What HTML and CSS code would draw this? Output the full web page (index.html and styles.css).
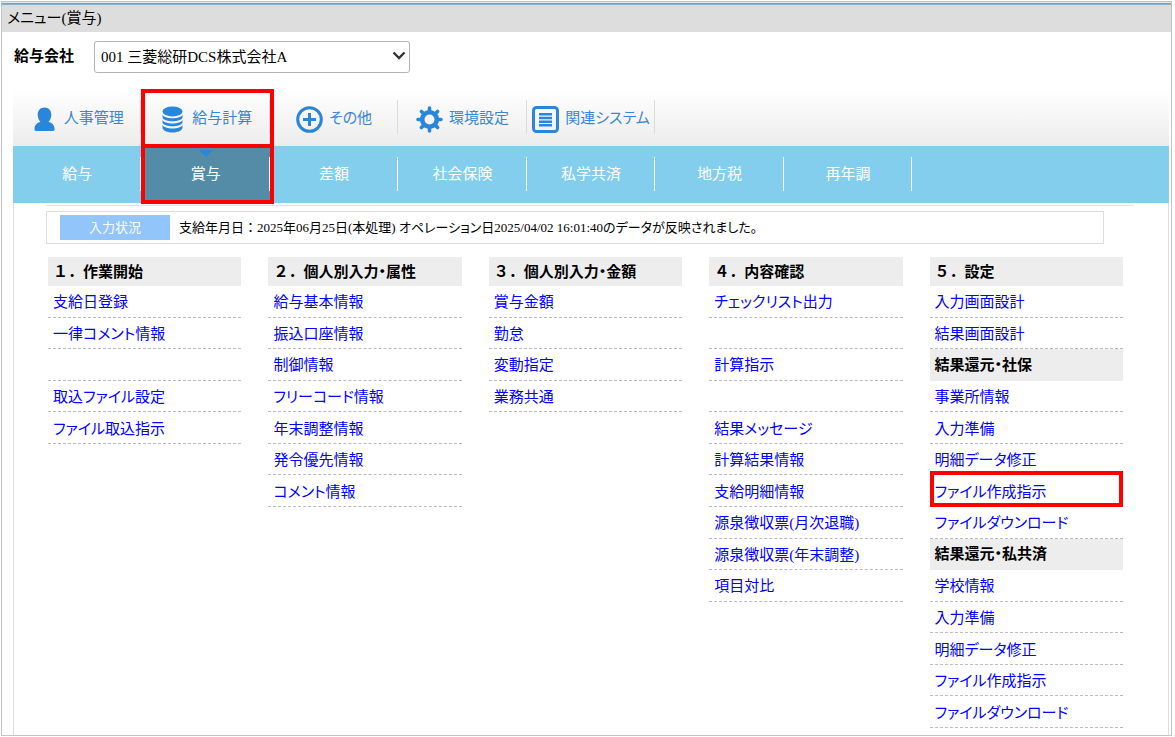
FILE: index.html
```html
<!DOCTYPE html>
<html lang="ja">
<head>
    <meta charset="UTF-8">
    <meta name="viewport" content="width=device-width, initial-scale=1.0">
    <title>メニュー(賞与)</title>
    <link rel="stylesheet" href="styles.css">
</head>
<body>
    <div class="window">
        <div class="window-edge"></div>
        <h1 class="title">メニュー(賞与)</h1>

        <div class="company">
            <label for="company">給与会社</label>
            <div class="select-box">
                <select id="company">
                    <option>001 三菱総研DCS株式会社A</option>
                </select>
                <svg class="arrow" viewBox="0 0 14 10"><path d="M1.5 1.500 L7 7 L12.5 1.500" fill="none" stroke="#333" stroke-width="2.4"/></svg>
            </div>
        </div>

        <div class="panel">
            <nav class="main-nav">
                <a href="#">
                    <svg class="icon" viewBox="0 0 27 27"><path d="M13.500 1.500c4 0 6.800 2.800 6.800 7 0 3.500-1.300 6-2.800 7.400 3.600.8 6 3 6 6.600v1c0 .8-.6 1.400-1.400 1.400H4.900c-.8 0-1.400-.6-1.400-1.400v-1c0-3.600 2.400-5.800 6-6.600C8 14.500 6.700 12 6.700 8.500c0-4.200 2.800-7 6.800-7z"/></svg>
                    <span>人事管理</span>
                </a>
                <a href="#">
                    <svg class="icon" viewBox="0 0 27 27"><ellipse cx="13.500" cy="5.500" rx="10" ry="5"/><path d="M3.500 8.500c1.500 5 18.500 5 20 0v3c-1.500 5-18.500 5-20 0zM3.500 13.700c1.500 5 18.500 5 20 0v2.800c-1.500 5-18.500 5-20 0zM3.500 18.700c1.500 5 18.500 5 20 0v3.300c-1.500 6-18.500 6-20 0z"/></svg>
                    <span>給与計算</span>
                    <i class="mark mark-main"></i>
                </a>
                <a href="#">
                    <svg class="icon" viewBox="0 0 27 27"><circle cx="13.500" cy="13.500" r="11.800" fill="none" stroke="#2a86db" stroke-width="3"/><path d="M12 7h3v5h5v3h-5v5h-3v-5H7v-3h5z"/></svg>
                    <span>その他</span>
                </a>
                <a href="#">
                    <svg class="icon" viewBox="0 0 27 27">
                        <circle cx="13.500" cy="13.500" r="7.300" fill="none" stroke="#2a86db" stroke-width="4.600"/>
                        <g stroke="#2a86db" stroke-width="3.600" stroke-linecap="round">
                            <path d="M13.500 2v3M13.500 22v3M2 13.500h3M22 13.500h3M5.400 5.400l2.100 2.100M19.500 19.500l2.100 2.100M5.400 21.600l2.100-2.100M19.500 7.500l2.100-2.100"/>
                        </g>
                    </svg>
                    <span>環境設定</span>
                </a>
                <a href="#">
                    <svg class="icon" viewBox="0 0 27 27"><rect x="1.500" y="1.500" width="24" height="24" rx="3" fill="none" stroke="#2a86db" stroke-width="3"/><path d="M7 7h13v2.500H7zM7 10.700h13v2.500H7zM7 14.400h13v2.500H7zM7 18.100h13v2.500H7z"/></svg>
                    <span>関連システム</span>
                </a>
            </nav>

            <nav class="sub-nav">
                <a href="#">給与</a>
                <a href="#" class="active">賞与<i class="mark mark-sub"></i></a>
                <a href="#">差額</a>
                <a href="#">社会保険</a>
                <a href="#">私学共済</a>
                <a href="#">地方税</a>
                <a href="#">再年調</a>
            </nav>

            <div class="content">
                <div class="status">
                    <span class="status-label">入力状況</span>
                    <span>支給年月日<span class="full">：</span>2025年06月25日(本処理) オペレーション日2025/04/02 16:01:40のデータが反映されました。</span>
                </div>

                <div class="columns">
                    <ul>
                        <li class="head"><span class="full">１．</span>作業開始</li>
                        <li><a href="#">支給日登録</a></li>
                        <li><a href="#">一律コメント情報</a></li>
                        <li></li>
                        <li><a href="#">取込ファイル設定</a></li>
                        <li><a href="#">ファイル取込指示</a></li>
                    </ul>
                    <ul>
                        <li class="head"><span class="full">２．</span>個人別入力・属性</li>
                        <li><a href="#">給与基本情報</a></li>
                        <li><a href="#">振込口座情報</a></li>
                        <li><a href="#">制御情報</a></li>
                        <li><a href="#">フリーコード情報</a></li>
                        <li><a href="#">年末調整情報</a></li>
                        <li><a href="#">発令優先情報</a></li>
                        <li><a href="#">コメント情報</a></li>
                    </ul>
                    <ul>
                        <li class="head"><span class="full">３．</span>個人別入力・金額</li>
                        <li><a href="#">賞与金額</a></li>
                        <li><a href="#">勤怠</a></li>
                        <li><a href="#">変動指定</a></li>
                        <li><a href="#">業務共通</a></li>
                    </ul>
                    <ul>
                        <li class="head"><span class="full">４．</span>内容確認</li>
                        <li><a href="#">チェックリスト出力</a></li>
                        <li></li>
                        <li><a href="#">計算指示</a></li>
                        <li></li>
                        <li><a href="#">結果メッセージ</a></li>
                        <li><a href="#">計算結果情報</a></li>
                        <li><a href="#">支給明細情報</a></li>
                        <li><a href="#">源泉徴収票(月次退職)</a></li>
                        <li><a href="#">源泉徴収票(年末調整)</a></li>
                        <li><a href="#">項目対比</a></li>
                    </ul>
                    <ul>
                        <li class="head"><span class="full">５．</span>設定</li>
                        <li><a href="#">入力画面設計</a></li>
                        <li><a href="#">結果画面設計</a></li>
                        <li class="head">結果還元・社保</li>
                        <li><a href="#">事業所情報</a></li>
                        <li><a href="#">入力準備</a></li>
                        <li><a href="#">明細データ修正</a></li>
                        <li><a href="#">ファイル作成指示</a><i class="mark mark-row"></i></li>
                        <li><a href="#">ファイルダウンロード</a></li>
                        <li class="head">結果還元・私共済</li>
                        <li><a href="#">学校情報</a></li>
                        <li><a href="#">入力準備</a></li>
                        <li><a href="#">明細データ修正</a></li>
                        <li><a href="#">ファイル作成指示</a></li>
                        <li><a href="#">ファイルダウンロード</a></li>
                    </ul>
                </div>
            </div>
        </div>
    </div>
</body>
</html>
```
FILE: styles.css
```css
* {
    box-sizing: border-box;
}

body {
    margin: 0;
    padding: 1px 3px 1px 1px;
    min-height: 100vh;
    display: flex;
    font-family: "Liberation Serif", "Noto Sans CJK JP", serif;
    font-feature-settings: "palt";
    font-size: 15px;
    line-height: 20px;
    color: #000;
    background-color: #fff;
}

a {
    text-decoration: none;
}

.window {
    flex: 1;
    display: flex;
    flex-direction: column;
    border: 1px solid #c3c3c3;
}

.window-edge {
    height: 3px;
    border-top: 1px solid #e4e4e4;
    border-bottom: 1px solid #8fafc8;
    background-color: #999;
}

.title {
    margin: 0;
    padding: 3px 5px 4px;
    font-size: 15px;
    font-weight: normal;
    background-color: #ddd;
}

.company {
    display: flex;
    padding: 9px 12px 0;
    height: 57px;
}

.company label {
    width: 80px;
    padding-top: 5px;
    font-size: 15px;
    font-weight: bold;
}

.select-box {
    position: relative;
    width: 316px;
    height: 32px;
}

.select-box select {
    appearance: none;
    width: 100%;
    height: 100%;
    padding: 0 6px;
    border: 1px solid #b4b4b4;
    border-radius: 3px;
    background-color: #fff;
    font: inherit;
    font-feature-settings: inherit;
    color: #000;
}

.arrow {
    position: absolute;
    right: 4px;
    top: 10px;
    width: 14px;
    height: 10px;
    pointer-events: none;
}

.panel {
    flex: 1;
    display: flex;
    flex-direction: column;
    margin: 0 2px 0 11px;
}

.main-nav,
.sub-nav {
    display: grid;
    grid-template-columns: repeat(9, 1fr);
    height: 57px;
}

.main-nav {
    background: linear-gradient(#fff, #ececec);
}

.main-nav a,
.sub-nav a {
    position: relative;
    display: flex;
    align-items: center;
    justify-content: center;
    white-space: nowrap;
}

.main-nav a {
    gap: 6px;
    padding-top: 4px;
    color: #3a86d6;
}

.main-nav span {
    padding-bottom: 4px;
}

.main-nav a::after,
.sub-nav a::after {
    content: "";
    position: absolute;
    right: 0;
    top: 11px;
    width: 1px;
    height: 34px;
    background-color: #dcdcdc;
}

.icon {
    width: 27px;
    height: 27px;
    flex: none;
    fill: #2a86db;
}

.sub-nav {
    background-color: #82ceec;
}

.sub-nav a {
    padding-bottom: 2px;
    color: #fff;
}

.sub-nav a::after {
    background-color: #fff;
}

.sub-nav .active {
    background-color: #548ca7;
}

.sub-nav .active::before {
    content: "";
    position: absolute;
    top: 4px;
    border: 7px solid transparent;
    border-top-color: #2a86db;
    border-bottom: none;
}

/* red frames */
.mark {
    position: absolute;
    border: 4px solid #f00;
    z-index: 1;
    pointer-events: none;
}

.mark-main {
    inset: 0 -4px -2px 0;
}

.mark-sub {
    inset: -2px -4px -1px 0;
}

.mark-row {
    inset: -4px 0 -1px;
}

.content {
    flex: 1;
    display: flex;
    flex-direction: column;
    padding: 2px 34px 7px 32px;
    border-left: 1px solid #ddd;
    border-right: 1px solid #ddd;
}

.content::before {
    content: "";
    height: 1px;
    margin-bottom: 5px;
    background-color: #e2e2e2;
}

.status {
    display: flex;
    align-items: center;
    gap: 9px;
    height: 33px;
    margin-right: 30px;
    padding: 0 13px;
    border: 1px solid #ddd;
    font-size: 13px;
}

.status-label {
    width: 110px;
    line-height: 25px;
    text-align: center;
    color: #fff;
    background-color: #92c5f9;
}

.columns {
    flex: 1;
    display: grid;
    grid-template-columns: repeat(5, 1fr);
    gap: 27px;
    margin: 13px 11px 0 2px;
}

.columns ul {
    display: grid;
    grid-template-rows: 29px repeat(14, minmax(24px, 1fr));
    margin: 0;
    padding: 0;
    list-style: none;
}

.columns li {
    position: relative;
    display: flex;
    align-items: center;
    padding: 2px 5px 0;
    border-bottom: 1px dashed #bbb;
}

.columns .head {
    padding: 0 5px 2px;
    border-bottom: none;
    font-family: "Noto Sans CJK JP", sans-serif;
    font-weight: bold;
    background-color: #ededed;
}

/* keep full-width punctuation at its own width */
.full {
    font-feature-settings: normal;
}

.columns a {
    color: #00f;
}
```
